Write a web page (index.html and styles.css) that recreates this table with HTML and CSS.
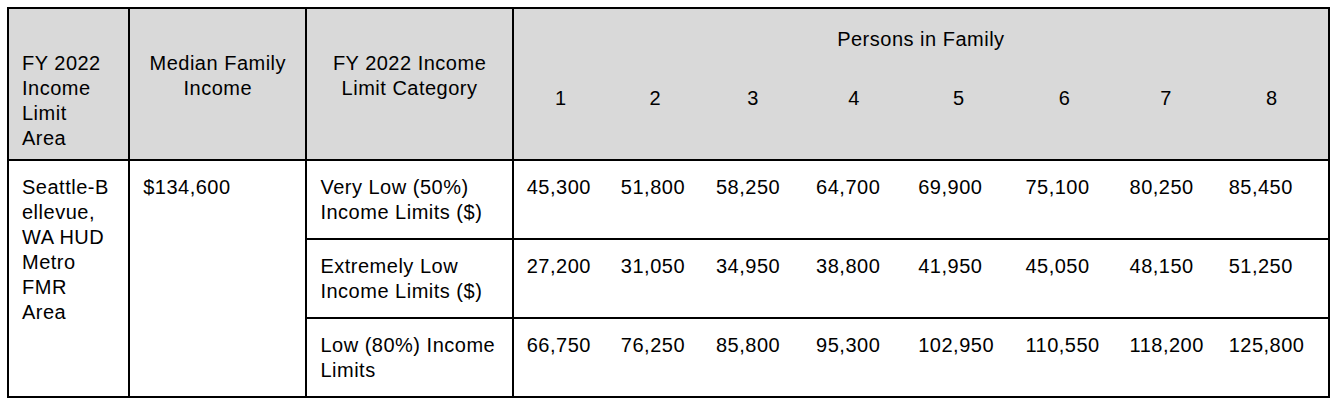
FILE: index.html
```html
<!DOCTYPE html>
<html lang="en">
<head>
<meta charset="utf-8">
<title>FY 2022 Income Limits</title>
<link rel="stylesheet" href="styles.css">
</head>
<body>
<table class="limits">
  <colgroup>
    <col class="c-area">
    <col class="c-median">
    <col class="c-cat">
    <col class="c-n1">
    <col class="c-n2">
    <col class="c-n3">
    <col class="c-n4">
    <col class="c-n5">
    <col class="c-n6">
    <col class="c-n7">
    <col class="c-n8">
  </colgroup>
  <thead>
    <tr class="hrow1">
      <th rowspan="2" class="h-area">FY 2022 Income Limit Area</th>
      <th rowspan="2" class="h-median">Median Family Income</th>
      <th rowspan="2" class="h-cat">FY 2022 Income Limit Category</th>
      <th colspan="8" class="h-persons">Persons in Family</th>
    </tr>
    <tr class="hrow2">
      <th class="h-num">1</th>
      <th class="h-num">2</th>
      <th class="h-num">3</th>
      <th class="h-num">4</th>
      <th class="h-num">5</th>
      <th class="h-num">6</th>
      <th class="h-num">7</th>
      <th class="h-num">8</th>
    </tr>
  </thead>
  <tbody>
    <tr class="brow">
      <td rowspan="3" class="area"><span class="brk">Seattle-Bellevue,</span> WA HUD Metro FMR Area</td>
      <td rowspan="3" class="median">$134,600</td>
      <td class="cat">Very Low (50%) Income Limits ($)</td>
      <td class="num">45,300</td>
      <td class="num">51,800</td>
      <td class="num">58,250</td>
      <td class="num">64,700</td>
      <td class="num">69,900</td>
      <td class="num">75,100</td>
      <td class="num">80,250</td>
      <td class="num">85,450</td>
    </tr>
    <tr class="brow">
      <td class="cat">Extremely Low Income Limits ($)</td>
      <td class="num">27,200</td>
      <td class="num">31,050</td>
      <td class="num">34,950</td>
      <td class="num">38,800</td>
      <td class="num">41,950</td>
      <td class="num">45,050</td>
      <td class="num">48,150</td>
      <td class="num">51,250</td>
    </tr>
    <tr class="brow">
      <td class="cat">Low (80%) Income Limits</td>
      <td class="num">66,750</td>
      <td class="num">76,250</td>
      <td class="num">85,800</td>
      <td class="num">95,300</td>
      <td class="num">102,950</td>
      <td class="num">110,550</td>
      <td class="num">118,200</td>
      <td class="num">125,800</td>
    </tr>
  </tbody>
</table>
</body>
</html>
```

FILE: styles.css
```css
html, body {
  margin: 0;
  padding: 0;
  background: #ffffff;
}

body {
  font-family: "Liberation Sans", Arial, sans-serif;
  font-size: 20px;
  line-height: 25px;
  letter-spacing: 0.5px;
  color: #000000;
}

.limits {
  margin: 7px 0 0 7px;
  width: 1323px;
  table-layout: fixed;
  border-collapse: collapse;
  border: 2px solid #000000;
}

.c-area { width: 121px; }
.c-median { width: 177px; }
.c-cat { width: 206px; }
.c-n1 { width: 95px; }
.c-n2 { width: 95px; }
.c-n3 { width: 100px; }
.c-n4 { width: 102px; }
.c-n5 { width: 107px; }
.c-n6 { width: 104px; }
.c-n7 { width: 99px; }
.c-n8 { width: 113px; }

.limits th,
.limits td {
  border: 2px solid #000000;
  padding: 0 13px;
  vertical-align: top;
  text-align: left;
  font-weight: normal;
}

.limits thead th {
  background: #d9d9d9;
}

.hrow1 { height: 62px; }
.hrow2 { height: 90px; }
.brow { height: 79px; }

.limits .h-area {
  padding-top: 42px;
  padding-right: 15px;
}

.limits .h-median,
.limits .h-cat {
  padding-top: 42px;
  text-align: center;
}

.limits .h-persons {
  text-align: center;
  vertical-align: middle;
  border-bottom: none;
}

.limits .h-num {
  text-align: center;
  border-top: none;
  border-left: none;
  border-right: none;
  padding-top: 16px;
}

.limits td {
  padding-top: 14px;
}

.limits .area {
  padding-right: 15px;
}

.brk {
  word-break: break-all;
}

.limits .cat {
  padding-right: 8px;
}

.limits .num {
  border-left: none;
  border-right: none;
  padding-right: 2px;
  white-space: nowrap;
}
```
